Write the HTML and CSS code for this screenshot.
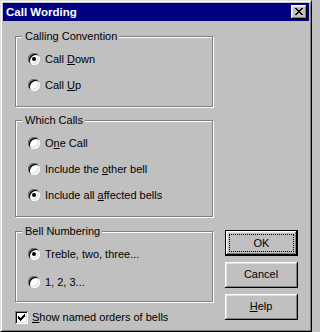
FILE: index.html
```html
<!DOCTYPE html>
<html lang="en">
<head>
<meta charset="utf-8">
<title>Call Wording</title>
<link rel="stylesheet" href="styles.css">
</head>
<body>
<div class="window">
  <div class="titlebar">
    <span class="title">Call Wording</span>
    <span class="close">
      <svg width="8" height="7" viewBox="0 0 8 7" shape-rendering="crispEdges"><path d="M0 0h2v1h-2z M6 0h2v1h-2z M1 1h2v1h-2z M5 1h2v1h-2z M2 2h4v1h-4z M3 3h2v1h-2z M2 4h4v1h-4z M1 5h2v1h-2z M5 5h2v1h-2z M0 6h2v1h-2z M6 6h2v1h-2z" fill="#000"/></svg>
    </span>
  </div>
  <div class="client">
    <div class="left">
      <div class="group g1">
        <div class="group-title">Calling Convention</div>
        <div class="rows">
          <div class="row"><span class="radio on"><span class="dot"></span></span><span class="lbl">Call <u>D</u>own</span></div>
          <div class="row"><span class="radio"></span><span class="lbl">Call <u>U</u>p</span></div>
        </div>
      </div>
      <div class="group g2">
        <div class="group-title">Which Calls</div>
        <div class="rows">
          <div class="row"><span class="radio"></span><span class="lbl">O<u>n</u>e Call</span></div>
          <div class="row"><span class="radio"></span><span class="lbl">Include the <u>o</u>ther bell</span></div>
          <div class="row"><span class="radio on"><span class="dot"></span></span><span class="lbl">Include all <u>a</u>ffected bells</span></div>
        </div>
      </div>
      <div class="group g3">
        <div class="group-title">Bell Numbering</div>
        <div class="rows spaced">
          <div class="row"><span class="radio on"><span class="dot"></span></span><span class="lbl">Treble, two, three...</span></div>
          <div class="row"><span class="radio"></span><span class="lbl">1, 2, 3...</span></div>
        </div>
      </div>
      <div class="check-row">
        <span class="checkbox">
          <svg width="7" height="7" viewBox="0 0 7 7" shape-rendering="crispEdges"><path d="M6 0h1v1h-1z M5 1h2v1h-2z M0 2h1v1h-1z M4 2h3v1h-3z M0 3h2v1h-2z M3 3h3v1h-3z M0 4h5v1h-5z M1 5h3v1h-3z M2 6h1v1h-1z" fill="#000"/></svg>
        </span>
        <span class="lbl"><u>S</u>how named orders of bells</span>
      </div>
    </div>
    <div class="buttons">
      <div class="btn default"><span class="focus">OK</span></div>
      <div class="btn"><span class="face">Cancel</span></div>
      <div class="btn"><span class="face"><u>H</u>elp</span></div>
    </div>
  </div>
</div>
</body>
</html>
```
FILE: styles.css
```css
html, body {
  margin: 0;
  padding: 0;
  background: #c0c0c0;
}
body {
  font-family: "Liberation Sans", Arial, sans-serif;
  font-size: 11px;
  color: #000;
}
.window {
  width: 312px;
  height: 332px;
  box-sizing: border-box;
  background: #c0c0c0;
  border: 1px solid;
  border-color: #dfdfdf #000 #000 #dfdfdf;
  box-shadow: inset 1px 1px 0 #fff, inset -1px -1px 0 #808080;
  padding: 2px;
  display: flex;
  flex-direction: column;
}
.titlebar {
  height: 18px;
  background: #000080;
  display: flex;
  align-items: center;
  justify-content: space-between;
  padding: 0 2px 0 3px;
}
.title {
  color: #fff;
  font-weight: bold;
  font-size: 11.5px;
  line-height: 18px;
}
.close {
  width: 16px;
  height: 14px;
  box-sizing: border-box;
  background: #c0c0c0;
  box-shadow: inset -1px -1px 0 #000, inset 1px 1px 0 #fff, inset -2px -2px 0 #808080, inset 2px 2px 0 #dfdfdf;
  display: flex;
  align-items: center;
  justify-content: center;
  padding: 0 1px 1px 0;
}
.close svg { display: block; }
.client {
  flex: 1;
  display: flex;
  gap: 12px;
  padding: 15px 11px 5px 12px;
}
.left {
  width: 198px;
  display: flex;
  flex-direction: column;
}
.group {
  border: 1px solid #808080;
  box-shadow: 1px 1px 0 #fff, inset 1px 1px 0 #fff;
  padding: 0 0 8px 12px;
}
.g2 { margin-top: 13px; }
.g3 { margin-top: 14px; padding-bottom: 6px; }
.group-title {
  align-self: flex-start;
  width: fit-content;
  margin: -7px 0 0 -6px;
  padding: 0 2px 0 3px;
  line-height: 13px;
  height: 13px;
  background: #c0c0c0;
  position: relative;
}
.rows {
  margin-top: 3px;
  display: flex;
  flex-direction: column;
}
.rows.spaced { gap: 2px; }
.row {
  height: 26px;
  display: flex;
  align-items: center;
}
.lbl {
  margin-left: 5px;
  line-height: 13px;
  white-space: nowrap;
}
.radio {
  width: 12px;
  height: 12px;
  flex: none;
  border-radius: 50%;
  background: #fff;
  box-shadow: inset 1px 1px 0 #808080, inset -1px -1px 0 #fff, inset 2px 2px 0 #000, inset -2px -2px 0 #dfdfdf;
  display: flex;
  align-items: center;
  justify-content: center;
}
.dot {
  width: 4px;
  height: 4px;
  border-radius: 50%;
  background: #000;
}
.check-row {
  margin-top: 9px;
  height: 13px;
  display: flex;
  align-items: center;
}
.check-row .lbl { margin-left: 4px; }
.checkbox {
  width: 13px;
  height: 13px;
  flex: none;
  box-sizing: border-box;
  background: #fff;
  box-shadow: inset 1px 1px 0 #808080, inset -1px -1px 0 #fff, inset 2px 2px 0 #000, inset -2px -2px 0 #dfdfdf;
  display: flex;
  align-items: center;
  justify-content: center;
}
.checkbox svg { display: block; }
.buttons {
  align-self: flex-end;
  margin-bottom: 4px;
  display: flex;
  flex-direction: column;
  gap: 6px;
}
.btn {
  width: 73px;
  height: 26px;
  box-sizing: border-box;
  background: #c0c0c0;
  box-shadow: inset -1px -1px 0 #000, inset 1px 1px 0 #fff, inset -2px -2px 0 #808080, inset 2px 2px 0 #dfdfdf;
  display: flex;
  padding: 1px 2px 2px 1px;
}
.btn.default {
  border: 1px solid #000;
  padding: 3px;
}
.face, .focus {
  flex: 1;
  display: flex;
  align-items: center;
  justify-content: center;
  line-height: 13px;
}
.focus {
  border: 1px dotted #000;
}
```
